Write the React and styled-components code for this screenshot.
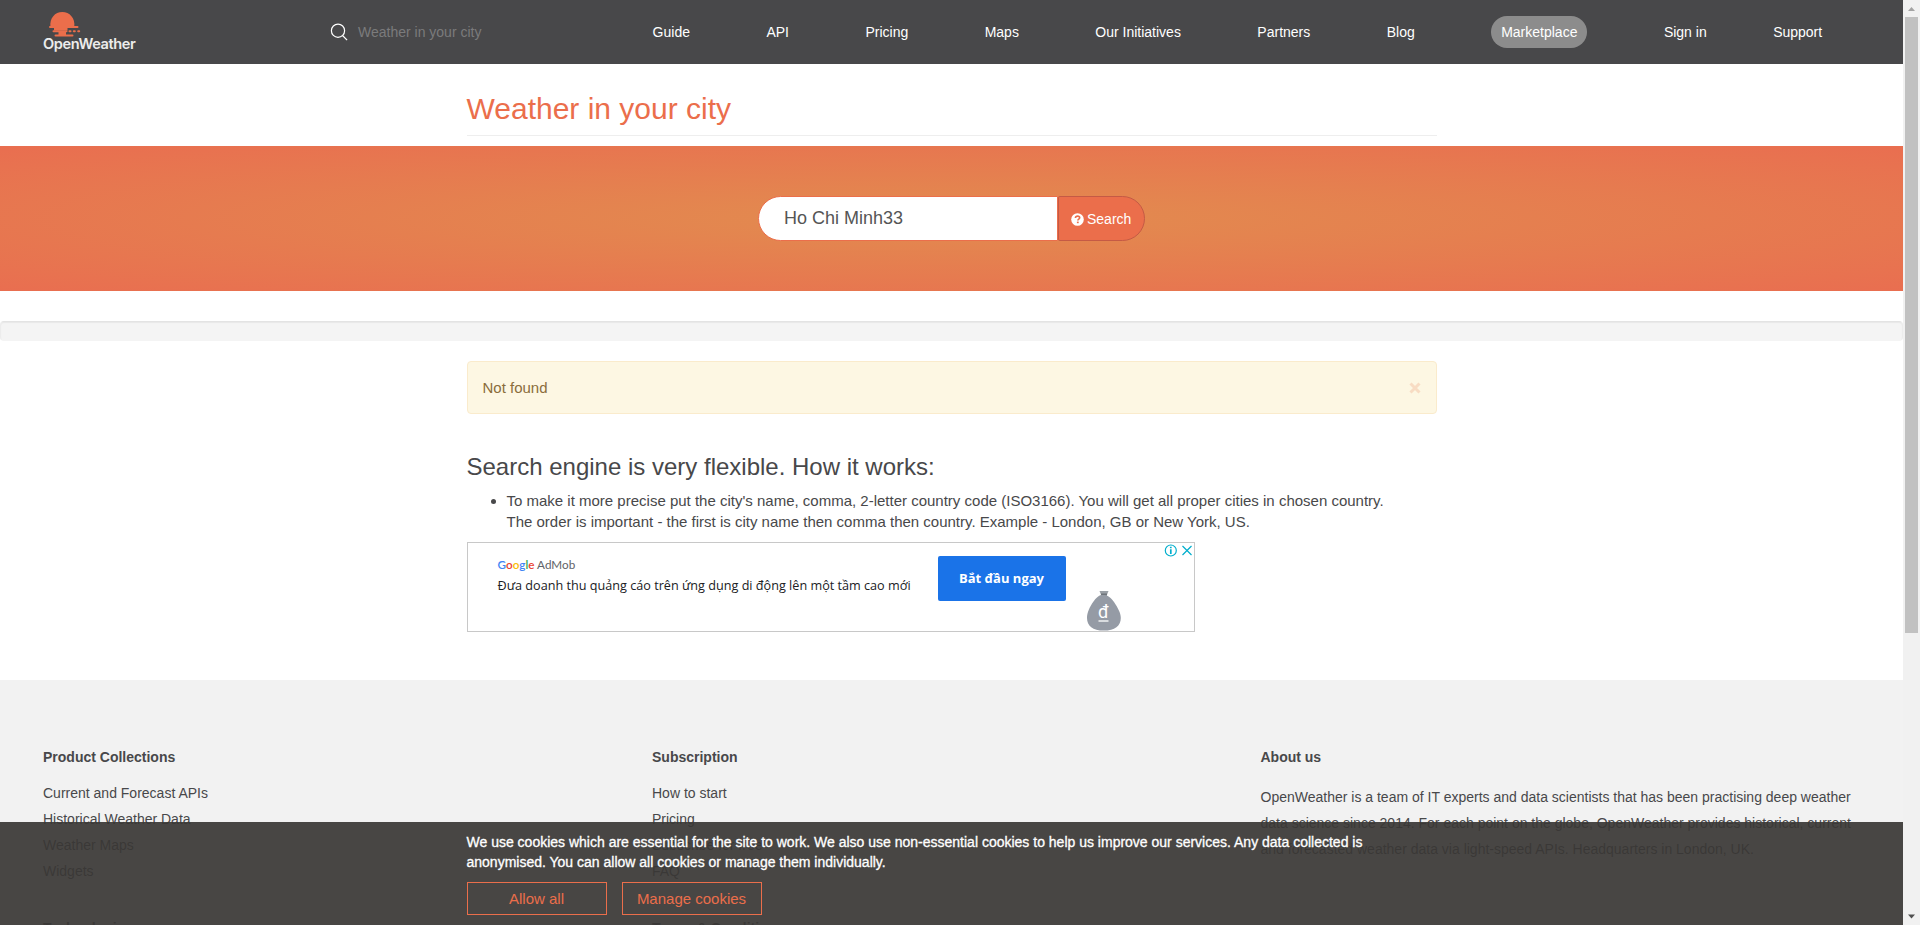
import React from "react";
import styled, { createGlobalStyle } from "styled-components";

const accent = "#eb6e4b";
const ink = "#48484a";

const GlobalStyle = createGlobalStyle`
  *, *::before, *::after { box-sizing: border-box; }
  html, body { margin: 0; padding: 0; overflow: hidden; }
  body {
    background: #fff;
    color: ${ink};
    font-family: "Liberation Sans", Arial, sans-serif;
    font-size: 15px;
    line-height: 1.42857;
  }
  h1, h2, h3, h4, p, ul { margin: 0; padding: 0; font-weight: normal; }
`;

const Viewport = styled.div`
  position: relative;
  display: flex;
  width: 1920px;
  height: 925px;
  overflow: hidden;
`;

const Page = styled.div`
  flex: 0 0 1903px;
  height: 925px;
  overflow: hidden;
`;

/* Navigation */
const NavBar = styled.nav`
  display: flex;
  align-items: center;
  height: 64px;
  padding-left: 43px;
  background: ${ink};
  font-size: 14px;
  line-height: 20px;
`;

const Logo = styled.a`
  display: flex;
  flex-direction: column;
  width: 94px;
  height: 64px;
  padding-top: 12px;
`;

const LogoMark = styled.svg`
  flex: none;
  margin-left: 6px;
`;

const LogoText = styled.span`
  margin-top: -2px;
  color: #ececec;
  font-family: Inter, sans-serif;
  font-size: 14.6px;
  font-weight: 600;
  letter-spacing: -0.42px;
  line-height: 18px;
  white-space: nowrap;
`;

const NavSearch = styled.div`
  display: flex;
  align-items: center;
  gap: 10px;
  width: 322.6px;
  margin-left: 193px;
  color: #7b7b7c;
`;

const NavLinks = styled.div`
  display: flex;
  align-items: center;
  gap: 76.45px;
`;

const NavLink = styled.a`
  color: #fff;
  white-space: nowrap;
  margin-left: ${(p) => p.$shift || 0}px;
`;

const NavPill = styled(NavLink)`
  padding: 6px 10px;
  border-radius: 16px;
  background: #8c8c8c;
`;

/* Main content */
const Container = styled.div`
  width: 970px;
  margin: 0 auto;
`;

const TitleBox = styled(Container)`
  height: 72px;
  padding-top: 27px;
  border-bottom: 1px solid #eee;
`;

const Title = styled.h1`
  color: ${accent};
  font-size: 30px;
  line-height: 36px;
`;

const SearchBand = styled.section`
  display: flex;
  justify-content: center;
  align-items: flex-start;
  height: 145px;
  margin-top: 10px;
  padding-top: 50px;
  background: radial-gradient(ellipse at center, #e28c4f 0%, #e96e50 100%);
`;

const CityInput = styled.div`
  width: 300px;
  height: 45px;
  padding: 0 25px;
  border: 1px solid ${accent};
  border-radius: 25px 0 0 25px;
  background: #fff;
  color: #555;
  font-size: 18px;
  line-height: 42px;
`;

const SearchButton = styled.button`
  display: flex;
  align-items: center;
  gap: 3px;
  width: 87px;
  height: 45px;
  padding: 1px 0 0 12px;
  border: 1px solid #c55a45;
  border-radius: 2px 25px 25px 2px;
  background: ${accent};
  color: #fff;
  font: 14px "Liberation Sans", Arial, sans-serif;
`;

const Well = styled.div`
  height: 20px;
  margin-top: 30px;
  border: 1px solid #ececec;
  border-top-color: #e3e3e3;
  border-bottom-color: #f4f4f4;
  border-radius: 4px;
  background: #f4f4f4;
  box-shadow: inset 0 1px 1px rgba(0, 0, 0, 0.05);
`;

const Alert = styled(Container)`
  display: flex;
  justify-content: space-between;
  align-items: center;
  height: 53px;
  margin-top: 20px;
  padding: 0 15px;
  border: 1px solid #faebcc;
  border-radius: 4px;
  background: #fdf7e3;
  color: #8a6d3b;
`;

const Help = styled(Container)`
  padding-top: 36px;
`;

const HelpTitle = styled.h3`
  font-size: 24px;
  line-height: 34px;
`;

const HelpList = styled.ul`
  padding: 6px 40px 0;
`;

/* Advertisement */
const Ad = styled.div`
  position: relative;
  display: flex;
  width: 728px;
  height: 90px;
  margin-top: 9px;
  padding-left: 30px;
  border: 1px solid #c8c8c8;
  background: #fff;
  font-family: Roboto, sans-serif;
`;

const AdCopy = styled.div`
  width: 440px;
  padding-top: 13px;
  white-space: nowrap;
`;

const AdBrand = styled.div`
  color: #5f6368;
  font-family: Lato, sans-serif;
  font-size: 11.7px;
  line-height: 16px;
`;

const BrandLetter = styled.span`
  color: ${(p) => p.$color};
  font-weight: 600;
`;

const AdLine = styled.div`
  margin-top: 4px;
  color: #202124;
  font-family: "Open Sans", sans-serif;
  font-size: 12.65px;
  line-height: 18px;
`;

const AdButton = styled.div`
  width: 128px;
  height: 45px;
  margin-top: 13px;
  border-radius: 2px;
  background: #1a73e8;
  color: #fff;
  font-family: "Open Sans", sans-serif;
  font-size: 13px;
  font-weight: 700;
  line-height: 44px;
  text-align: center;
  white-space: nowrap;
`;

const MoneyBag = styled.svg`
  align-self: flex-end;
  margin-left: 20px;
`;

const AdChoices = styled.svg`
  position: absolute;
  top: 0;
  right: 1px;
`;

/* Footer */
const Footer = styled.footer`
  display: grid;
  grid-template-columns: 609px 608.5px 600px;
  height: 400px;
  margin-top: 48px;
  padding: 64px 0 0 43px;
  background: #f2f2f2;
  font-size: 14px;
  line-height: 26px;
`;

const FooterHeading = styled.h4`
  margin: ${(p) => (p.$next ? "31px" : "0")} 0 10px;
  font-size: 14px;
  font-weight: bold;
  line-height: 26px;
`;

const FooterLink = styled.a`
  display: block;
`;

const AboutText = styled.p`
  margin-top: 14px;
  white-space: nowrap;
`;

/* Cookie notice */
const CookieBar = styled.div`
  position: absolute;
  left: 0;
  bottom: 0;
  width: 1903px;
  height: 103px;
  padding-top: 10px;
  background: rgba(57, 55, 53, 0.92);
`;

const CookieText = styled.p`
  color: #fff;
  font-size: 14px;
  line-height: 20px;
  -webkit-text-stroke: 0.3px #fff;
  white-space: nowrap;
`;

const CookieActions = styled.div`
  display: flex;
  gap: 15px;
  margin-top: 10px;
`;

const CookieButton = styled.button`
  width: 140px;
  height: 33px;
  padding: 0;
  border: 1px solid ${accent};
  background: transparent;
  color: ${accent};
  font: 15px "Liberation Sans", Arial, sans-serif;
`;

/* Scrollbar */
const Scrollbar = styled.div`
  display: flex;
  flex-direction: column;
  align-items: center;
  justify-content: space-between;
  width: 17px;
  height: 925px;
  background: #f1f1f1;
`;

const ScrollThumb = styled.div`
  width: 13px;
  height: 616px;
  margin-bottom: 275px;
  background: #c1c1c1;
`;

const ScrollArrow = styled.svg`
  flex: none;
`;

const links = ["Guide", "API", "Pricing", "Maps", "Our Initiatives", "Partners", "Blog"];

const brand = [
  ["G", "#4285f4"],
  ["o", "#ea4335"],
  ["o", "#fbbc04"],
  ["g", "#4285f4"],
  ["l", "#34a853"],
  ["e", "#ea4335"],
];

const columns = [
  {
    title: "Product Collections",
    items: ["Current and Forecast APIs", "Historical Weather Data", "Weather Maps", "Widgets"],
    next: "Technologies",
  },
  {
    title: "Subscription",
    items: ["How to start", "Pricing", "Subscribe for free", "FAQ"],
    next: "Terms & Conditions",
  },
];

export default function App() {
  return (
    <Viewport>
      <GlobalStyle />
      <Page>
        <NavBar>
          <Logo>
            <LogoMark width="32" height="25" viewBox="0 0 32 25" fill={accent}>
              <path d="M1.4 15C.4 6 6 0 13.3 0s13 6 12 15z" />
              <rect x="0" y="14" width="29.5" height="2" rx="1" />
              <rect x="5" y="15.500" width="13.5" height="3" />
              <rect x="3.5" y="18.200" width="15" height="2" rx="1" />
              <rect x="19.5" y="18.200" width="3" height="2" rx="1" />
              <rect x="23.8" y="18.200" width="3" height="2" rx="1" />
              <rect x="28.2" y="18.200" width="3" height="2" rx="1" />
              <rect x="9.5" y="20" width="7.500" height="3" />
              <rect x="5.500" y="22.500" width="19" height="2" rx="1" />
            </LogoMark>
            <LogoText>OpenWeather</LogoText>
          </Logo>
          <NavSearch>
            <svg width="18" height="18" viewBox="0 0 18 18" fill="none" stroke="#fff" strokeWidth="1.2">
              <circle cx="8" cy="7.7" r="6.6" />
              <path d="M12.5 12.5l4.6 4.6" />
            </svg>
            Weather in your city
          </NavSearch>
          <NavLinks>
            {links.map((l) => (
              <NavLink key={l}>{l}</NavLink>
            ))}
            <NavPill>Marketplace</NavPill>
            <NavLink>Sign in</NavLink>
            <NavLink $shift={-10}>Support</NavLink>
          </NavLinks>
        </NavBar>

        <TitleBox>
          <Title>Weather in your city</Title>
        </TitleBox>

        <SearchBand>
          <CityInput>Ho Chi Minh33</CityInput>
          <SearchButton>
            <svg width="13" height="13" viewBox="0 0 13 13">
              <circle cx="6.5" cy="6.5" r="6.3" fill="#fff" />
              <path d="M4.4 5C4.5 3.6 5.4 3.1 6.6 3.1s2.1.6 2.1 1.7c0 1.3-1.9 1.3-1.9 2.7" fill="none" stroke={accent} strokeWidth="1.6" />
              <rect x="5.9" y="8.6" width="1.8" height="1.6" fill={accent} />
            </svg>
            Search
          </SearchButton>
        </SearchBand>

        <Well />

        <Alert>
          <span>Not found</span>
          <svg width="12" height="12" viewBox="0 0 12 12" stroke="#f8dcc3" strokeWidth="3">
            <path d="M1.5 1.5l9 9M10.5 1.5l-9 9" />
          </svg>
        </Alert>

        <Help>
          <HelpTitle>Search engine is very flexible. How it works:</HelpTitle>
          <HelpList>
            <li>
              To make it more precise put the city's name, comma, 2-letter country code (ISO3166). You will get all proper cities in chosen country.
              <br />
              The order is important - the first is city name then comma then country. Example - London, GB or New York, US.
            </li>
          </HelpList>
          <Ad>
            <AdCopy>
              <AdBrand>
                {brand.map(([ch, color], i) => (
                  <BrandLetter key={i} $color={color}>{ch}</BrandLetter>
                ))}{" "}
                AdMob
              </AdBrand>
              <AdLine>Đưa doanh thu quảng cáo trên ứng dụng di động lên một tầm cao mới</AdLine>
            </AdCopy>
            <AdButton>Bắt đầu ngay</AdButton>
            <MoneyBag width="36" height="41" viewBox="0 0 36 41">
              <path d="M13.5 1h9l-2 5h-5z" fill="#9aa0a6" />
              <path d="M15 3.5h6v2h-6z" fill="#6f757b" />
              <path d="M15 5C20 4.5 24 6 28 12c4 6 6.800 11 6.800 16 0 8-6 12.600-17 12.600S1 36 1 28c0-5 2.500-11 6.500-16.500C10 8 12.500 5.500 15 5z" fill="#959ba5" />
              <text x="17.5" y="28" fill="#fff" fontSize="18" fontFamily="Roboto" textAnchor="middle">đ</text>
              <path d="M12.5 31h10" stroke="#fff" strokeWidth="1.3" />
            </MoneyBag>
            <AdChoices width="30" height="15" viewBox="0 0 30 15" fill="none" stroke="#00aecd" strokeWidth="1.2">
              <circle cx="7.8" cy="7.5" r="5.5" />
              <path d="M7.8 6.300v4.700M7.800 3.800v1.500" strokeWidth="1.7" />
              <path d="M19.5 3l9 9M28.5 3l-9 9" />
            </AdChoices>
          </Ad>
        </Help>

        <Footer>
          {columns.map((c) => (
            <div key={c.title}>
              <FooterHeading>{c.title}</FooterHeading>
              {c.items.map((i) => (
                <FooterLink key={i}>{i}</FooterLink>
              ))}
              <FooterHeading $next>{c.next}</FooterHeading>
            </div>
          ))}
          <div>
            <FooterHeading>About us</FooterHeading>
            <AboutText>
              OpenWeather is a team of IT experts and data scientists that has been practising deep weather
              <br />
              data science since 2014. For each point on the globe, OpenWeather provides historical, current
              <br />
              and forecasted weather data via light-speed APIs. Headquarters in London, UK.
            </AboutText>
          </div>
        </Footer>
      </Page>

      <Scrollbar>
        <ScrollArrow width="17" height="17" viewBox="0 0 17 17">
          <path d="M5 11l3.500-4 3.500 4z" fill="#a3a3a3" />
        </ScrollArrow>
        <ScrollThumb />
        <ScrollArrow width="17" height="17" viewBox="0 0 17 17">
          <path d="M5 6.500l3.500 4 3.500-4z" fill="#505050" />
        </ScrollArrow>
      </Scrollbar>

      <CookieBar>
        <Container>
          <CookieText>
            We use cookies which are essential for the site to work. We also use non-essential cookies to help us improve our services. Any data collected is
            <br />
            anonymised. You can allow all cookies or manage them individually.
          </CookieText>
          <CookieActions>
            <CookieButton>Allow all</CookieButton>
            <CookieButton>Manage cookies</CookieButton>
          </CookieActions>
        </Container>
      </CookieBar>
    </Viewport>
  );
}
